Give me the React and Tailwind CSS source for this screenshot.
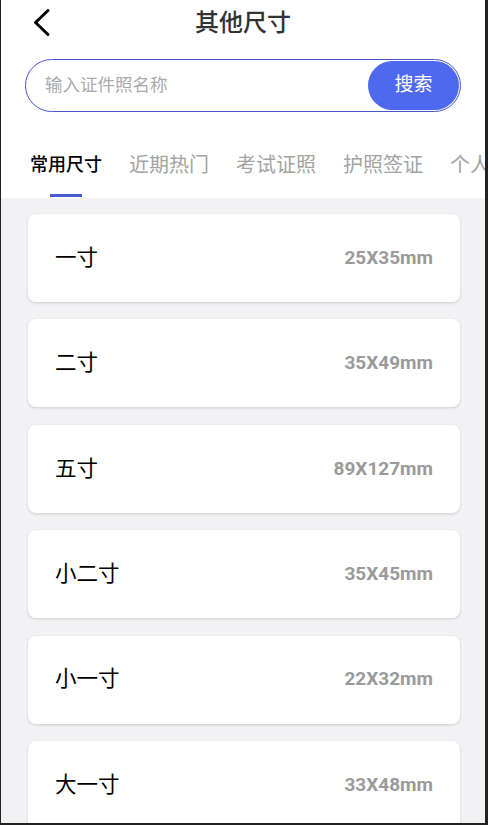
const tabs = ['常用尺寸', '近期热门', '考试证照', '护照签证', '个人']

const sizes = [
  { name: '一寸', spec: '25X35mm' },
  { name: '二寸', spec: '35X49mm' },
  { name: '五寸', spec: '89X127mm' },
  { name: '小二寸', spec: '35X45mm' },
  { name: '小一寸', spec: '22X32mm' },
  { name: '大一寸', spec: '33X48mm' },
]

export default function App() {
  return (
    <div
      className="w-[488px] h-[825px] overflow-hidden bg-white border-l border-r-[3px] border-b-2 border-[#222] flex flex-col"
      style={{ fontFamily: 'Roboto, "Noto Sans CJK SC", sans-serif' }}
    >
      {/* Header */}
      <div className="relative h-[45px] flex items-center justify-center shrink-0">
        <svg className="absolute left-[30px] top-[7px]" width="24" height="32" viewBox="0 0 24 32" fill="none">
          <polyline points="17,3.5 4.5,15.5 17,27.5" stroke="#000" strokeWidth="3" strokeLinecap="round" strokeLinejoin="round" />
        </svg>
        <h1 className="text-[24px] font-medium text-[#333] leading-none">其他尺寸</h1>
      </div>

      {/* Search */}
      <div className="px-[24px] pt-[14px] shrink-0">
        <div className="h-[53px] rounded-full border border-[#4856c8] flex items-center pl-[19px] pr-[1px]">
          <span className="flex-1 text-[17.5px] text-[#aaa]">输入证件照名称</span>
          <button className="w-[91px] h-[49px] rounded-full bg-[#4e69ef] text-white text-[19px]">搜索</button>
        </div>
      </div>

      {/* Tabs */}
      <div className="flex gap-[27px] pl-[29px] pt-[40px] pb-[1px] whitespace-nowrap shrink-0 overflow-hidden">
        {tabs.map((t, i) => (
          <div key={t} className="flex flex-col items-center shrink-0">
            <span
              className={
                i === 0
                  ? 'text-[18px] leading-[26px] text-black font-medium'
                  : 'text-[20px] leading-[26px] text-[#a3a3a3]'
              }
            >
              {t}
            </span>
            <div className={i === 0 ? 'mt-[16px] w-[32px] h-[3px] bg-[#4a5bd0]' : 'mt-[16px] w-[32px] h-[3px]'} />
          </div>
        ))}
      </div>

      {/* List */}
      <div className="flex-1 bg-[#f2f2f4] pt-[16px] pl-[27px] flex flex-col gap-[17.4px]">
        {sizes.map((s) => (
          <div
            key={s.name}
            className="w-[432px] h-[88px] shrink-0 bg-white rounded-[8px] shadow-[0_1px_3px_rgba(0,0,0,0.16)] flex items-center justify-between px-[27px]"
          >
            <span className="text-[21.5px] text-black">{s.name}</span>
            <span className="text-[19px] font-bold text-[#9a9a9a]">{s.spec}</span>
          </div>
        ))}
      </div>
    </div>
  )
}
